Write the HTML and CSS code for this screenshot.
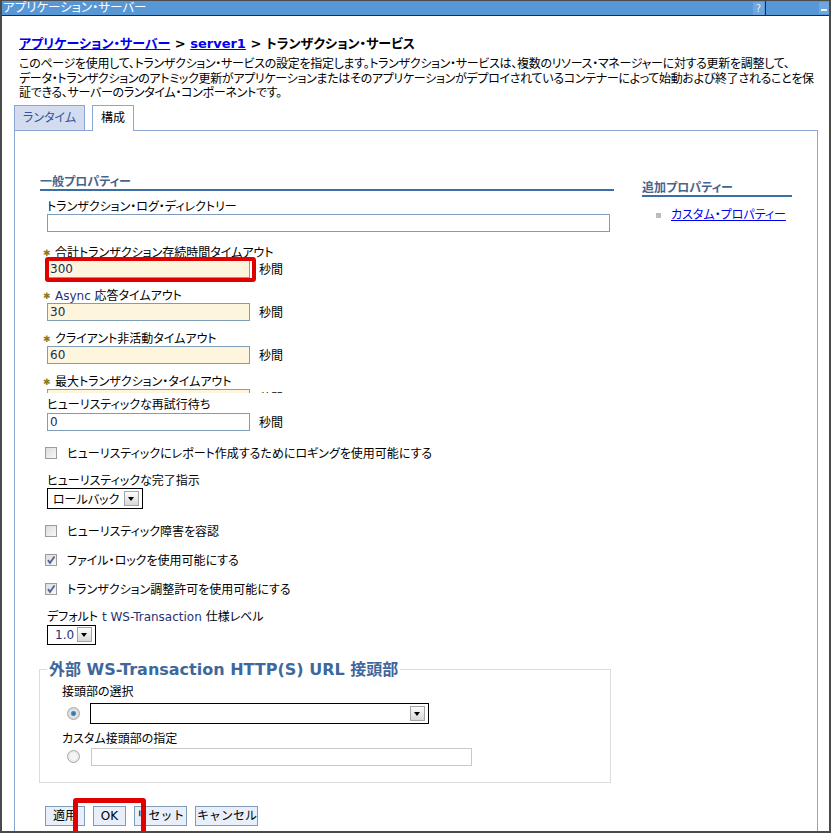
FILE: index.html
```html
<!DOCTYPE html>
<html lang="ja">
<head>
    <meta charset="UTF-8">
    <title>トランザクション・サービス</title>
    <link rel="stylesheet" href="styles.css">
</head>
<body>
<div class="window">
    <!-- タイトルバー -->
    <div class="titlebar">
        <span class="title">アプリケーション・サーバー</span>
        <span class="tb-help">?</span>
        <span class="tb-sep"></span>
        <span class="tb-min"></span>
    </div>

    <div class="page">
        <div class="crumbs">
            <a href="#">アプリケーション・サーバー</a> &gt; <a href="#" class="lat">server1</a> &gt; トランザクション・サービス
        </div>
        <p class="desc">このページを使用して、トランザクション・サービスの設定を指定します。トランザクション・サービスは、複数のリソース・マネージャーに対する更新を調整して、<br>データ・トランザクションのアトミック更新がアプリケーションまたはそのアプリケーションがデプロイされているコンテナーによって始動および終了されることを保<br>証できる、サーバーのランタイム・コンポーネントです。</p>

        <div class="tabs">
            <span class="tab">ランタイム</span>
            <span class="tab active">構成</span>
        </div>

        <div class="panel">
            <div class="main">
                <h3 class="sect">一般プロパティー</h3>

                <div class="field first">
                    <div class="label">トランザクション・ログ・ディレクトリー</div>
                    <div class="row"><span class="input long"></span></div>
                </div>

                <div class="field">
                    <div class="label"><span class="req">✱</span>合計トランザクション存続時間タイムアウト</div>
                    <div class="row"><span class="input short cream mark">300</span><span class="unit">秒間</span></div>
                </div>

                <div class="field">
                    <div class="label"><span class="req">✱</span><span class="lat">Async</span> 応答タイムアウト</div>
                    <div class="row"><span class="input short cream">30</span><span class="unit">秒間</span></div>
                </div>

                <div class="field">
                    <div class="label"><span class="req">✱</span>クライアント非活動タイムアウト</div>
                    <div class="row"><span class="input short cream">60</span><span class="unit">秒間</span></div>
                </div>

                <!-- スクリーンショットの継ぎ目で途中から切れている -->
                <div class="field cut">
                    <div class="label"><span class="req">✱</span>最大トランザクション・タイムアウト</div>
                    <div class="row"><span class="input short cream">120</span><span class="unit">秒間</span></div>
                </div>

                <div class="field after-cut">
                    <div class="label">ヒューリスティックな再試行待ち</div>
                    <div class="row"><span class="input short">0</span><span class="unit">秒間</span></div>
                </div>

                <div class="check"><span class="cb"></span>ヒューリスティックにレポート作成するためにロギングを使用可能にする</div>

                <div class="field sel-field">
                    <div class="label">ヒューリスティックな完了指示</div>
                    <div class="select sel-roll"><span class="sel-text">ロールバック</span><span class="drop"></span></div>
                </div>

                <div class="check"><span class="cb"></span>ヒューリスティック障害を容認</div>
                <div class="check"><span class="cb on"><svg width="10" height="10" viewBox="0 0 10 10"><path d="M2 5 L4 8 L8.5 1.5" fill="none" stroke="#4f6291" stroke-width="1.8"/></svg></span>ファイル・ロックを使用可能にする</div>
                <div class="check"><span class="cb on"><svg width="10" height="10" viewBox="0 0 10 10"><path d="M2 5 L4 8 L8.5 1.5" fill="none" stroke="#4f6291" stroke-width="1.8"/></svg></span>トランザクション調整許可を使用可能にする</div>

                <div class="field ver-field">
                    <div class="label">デフォルト <span class="lat">t WS-Transaction</span> 仕様レベル</div>
                    <div class="select sel-ver"><span class="sel-text lat">1.0</span><span class="drop"></span></div>
                </div>

                <fieldset class="prefix">
                    <legend>外部 WS-Transaction HTTP(S) URL 接頭部</legend>
                    <div class="label">接頭部の選択</div>
                    <div class="radio-row first-radio">
                        <span class="radio on"></span>
                        <div class="select sel-prefix"><span class="sel-text"></span><span class="drop"></span></div>
                    </div>
                    <div class="label custom-label">カスタム接頭部の指定</div>
                    <div class="radio-row">
                        <span class="radio"></span>
                        <span class="input prefix-input"></span>
                    </div>
                </fieldset>

                <div class="buttons">
                    <button class="btn b-apply">適用</button>
                    <span class="mark-wrap"><button class="btn b-ok">OK</button></span>
                    <button class="btn b-reset">リセット</button>
                    <button class="btn b-cancel">キャンセル</button>
                </div>
            </div>

            <div class="side">
                <h3 class="sect">追加プロパティー</h3>
                <ul class="links">
                    <li><a href="#">カスタム・プロパティー</a></li>
                </ul>
            </div>
        </div>
    </div>
</div>
</body>
</html>
```

FILE: styles.css
```css
/* 全体 */
html, body {
    margin: 0;
    padding: 0;
    background: #fff;
}

body {
    font-family: "DejaVu Sans", "Noto Sans CJK JP", sans-serif;
    font-size: 12px;
    font-feature-settings: "palt";
    color: #000;
}

.window {
    width: 831px;
    height: 833px;
    box-sizing: border-box;
    border: 2px solid #4a4a4a;
    border-top: 1px solid #4a4a4a;
    overflow: hidden;
    display: flex;
    flex-direction: column;
}

/* タイトルバー */
.titlebar {
    height: 14px;
    flex: none;
    background: #5897d6;
    border-bottom: 1px solid #2b2b2b;
    display: flex;
    align-items: center;
    color: #fff;
    line-height: 14px;
}
.title {
    padding-left: 1px;
    flex: 1;
    white-space: nowrap;
    font-size: 12.5px;
}
.tb-help {
    width: 11px;
    height: 13px;
    background: #6fa6dc;
    font-size: 10px;
    text-align: center;
    line-height: 13px;
    color: #e8f0fa;
}
.tb-sep {
    width: 1px;
    height: 14px;
    background: #2b2b2b;
    margin-left: 1px;
    margin-right: 53px;
}
.tb-min {
    width: 10px;
    height: 12px;
    background: #6fa6dc;
    position: relative;
}
.tb-min::after {
    content: "";
    position: absolute;
    left: 2px;
    right: 2px;
    bottom: 3px;
    height: 2px;
    background: #f0f5fb;
}

/* 本体 */
.page {
    flex: 1;
    padding: 20px 0 0 17px;
    display: flex;
    flex-direction: column;
    min-height: 0;
}

.crumbs {
    font-weight: bold;
    font-size: 13px;
    line-height: 16px;
    white-space: nowrap;
}
.crumbs a {
    color: #0000f0;
}

.desc {
    margin: 5px 0 4px;
    line-height: 14.5px;
    white-space: nowrap;
    letter-spacing: -0.3px;
}

.lat {
    color: #1f3372;
}
.crumbs a.lat {
    color: #0000f0;
}

/* タブ */
.tabs {
    display: flex;
    gap: 7px;
    margin-left: -5px;
    height: 25px;
    flex: none;
}
.tab {
    box-sizing: border-box;
    height: 25px;
    border: 1px solid #8aa6d6;
    border-bottom: none;
    line-height: 25px;
    padding: 0 8px;
    background: #d2dcee;
    color: #2f55a4;
}
.tab.active {
    background: #fff;
    color: #000;
    height: 26px;
    position: relative;
    z-index: 1;
    padding: 0 8px;
}

.panel {
    flex: 1;
    margin-left: -5px;
    width: 804px;
    box-sizing: border-box;
    border: 1px solid #8aa6d6;
    border-bottom: none;
    padding: 44px 0 0 25px;
    display: flex;
    gap: 28px;
}

.main {
    width: 574px;
}
.side {
    width: 150px;
    padding-top: 6px;
}

.sect {
    margin: 0;
    font-size: 12px;
    line-height: 14px;
    font-weight: bold;
    color: #47648e;
    border-bottom: 2px solid #3a6ea5;
    white-space: nowrap;
}

/* 入力項目 */
.field {
    padding-left: 7px;
    margin-bottom: 11px;
}
.field.first {
    margin-top: 9px;
    margin-bottom: 14px;
}
.label {
    height: 14px;
    line-height: 14px;
    white-space: nowrap;
}
.req {
    display: inline-block;
    width: 12px;
    margin-left: -4px;
    font-size: 9px;
    color: #8a7a1c;
    vertical-align: top;
    line-height: 14px;
}
.row {
    display: flex;
    align-items: center;
    height: 18px;
}
.input {
    box-sizing: border-box;
    height: 18px;
    border: 1px solid #7f9db9;
    background: #fff;
    padding-left: 2px;
    line-height: 16px;
    color: #1a2a58;
    font-size: 12px;
}
.input.long {
    width: 563px;
}
.input.short {
    width: 203px;
}
.input.cream {
    background: #fdf5dc;
}
.unit {
    margin-left: 9px;
    line-height: 14px;
    padding-top: 2px;
}

/* 赤枠 (強調) */
.mark {
    position: relative;
}
.mark::after {
    content: "";
    position: absolute;
    top: -4px;
    left: -3px;
    right: -7px;
    bottom: -5px;
    border: 4px solid #e00000;
    border-radius: 3px;
}

.field.cut {
    height: 18px;
    overflow: hidden;
    margin-bottom: 0;
}
.field.after-cut {
    margin-bottom: 14px;
}
.field.after-cut .label {
    height: 20px;
    padding-top: 5px;
    line-height: 15px;
    box-sizing: border-box;
}

/* チェックボックス */
.check {
    display: flex;
    align-items: center;
    height: 16px;
    padding-left: 5px;
    margin-bottom: 13px;
    white-space: nowrap;
}
.cb {
    box-sizing: border-box;
    width: 12px;
    height: 12px;
    border: 1px solid #9c9c9c;
    background: linear-gradient(135deg, #dcdcdc, #f8f8f8);
    margin-right: 10px;
    display: flex;
    align-items: center;
    justify-content: center;
}
.cb svg {
    display: block;
}

/* セレクト */
.select {
    box-sizing: border-box;
    height: 21px;
    border: 1px solid #000;
    display: flex;
    align-items: center;
    justify-content: space-between;
    padding: 0 3px 0 5px;
}
.sel-roll {
    width: 96px;
}
.sel-ver {
    width: 49px;
    height: 20px;
    margin-top: 1px;
    padding-left: 7px;
}
.sel-prefix {
    width: 339px;
}
.drop {
    box-sizing: border-box;
    width: 15px;
    height: 15px;
    border: 1px solid #a5a5a5;
    background: linear-gradient(#fdfdfd, #d8d8d8);
    position: relative;
}
.drop::after {
    content: "";
    position: absolute;
    left: 3px;
    top: 5px;
    border-left: 3.5px solid transparent;
    border-right: 3.5px solid transparent;
    border-top: 4px solid #000;
}
.field.sel-field {
    margin-bottom: 14px;
}
.field.ver-field {
    margin-bottom: 0;
}

/* 接頭部 */
.prefix {
    margin: 16px 0 0 -1px;
    width: 572px;
    box-sizing: border-box;
    border: 1px solid #dcdcdc;
    padding: 6px 0 16px 22px;
}
.prefix legend {
    font-weight: bold;
    font-size: 16px;
    line-height: 18px;
    color: #3e689c;
    padding: 0 2px;
    margin-left: -15px;
    font-family: "DejaVu Sans", "Noto Sans CJK JP", sans-serif;
}
.radio-row {
    display: flex;
    align-items: center;
    margin-top: 2px;
}
.first-radio {
    margin-top: 4px;
}
.custom-label {
    margin-top: 8px;
}
.radio {
    box-sizing: border-box;
    width: 13px;
    height: 13px;
    border-radius: 50%;
    border: 1px solid #a8a8a8;
    background: radial-gradient(circle, #f4f4f4 40%, #d6d6d6 100%);
    margin: 0 10px 0 5px;
}
.radio.on {
    background: radial-gradient(circle, #1f5f9c 0, #4ea0de 30%, #e6e6e6 40%, #c8c8c8 100%);
}
.prefix-input {
    width: 381px;
    border-color: #c8c8c8;
    margin-left: 1px;
}

/* ボタン */
.buttons {
    display: flex;
    gap: 8px;
    margin: 23px 0 0 5px;
}
.btn {
    font-family: inherit;
    font-size: 12px;
    height: 20px;
    padding: 0 1px;
    border: 1px solid #7f9db9;
    background: #e8effb;
    color: #000;
    line-height: 18px;
    white-space: nowrap;
}
.b-apply { width: 40px; }
.b-ok { width: 33px; }
.b-reset { width: 53px; }
.b-cancel { width: 63px; }
.mark-wrap {
    position: relative;
    display: flex;
}
.mark-wrap::after {
    content: "";
    position: absolute;
    top: -8px;
    bottom: -10px;
    left: -20px;
    right: -20px;
    border: 5px solid #e00000;
    border-radius: 3px;
}

/* 追加プロパティー */
.links {
    list-style: none;
    margin: 11px 0 0;
    padding: 0 0 0 29px;
}
.links li {
    position: relative;
    line-height: 14px;
    white-space: nowrap;
}
.links li::before {
    content: "";
    position: absolute;
    left: -15px;
    top: 5px;
    width: 5px;
    height: 5px;
    background: #bcbcbc;
}
.links a {
    color: #0000f0;
}
```
